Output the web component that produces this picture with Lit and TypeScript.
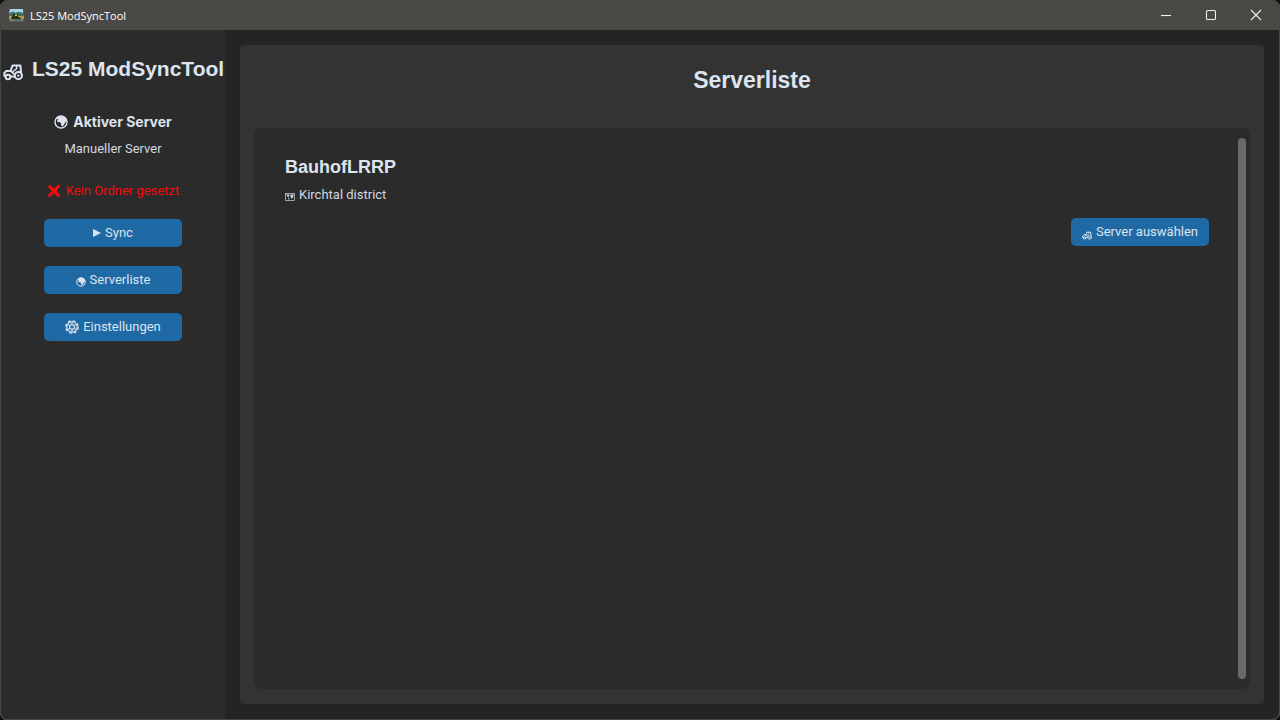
import { LitElement, html, css, svg } from "lit";
import { customElement } from "lit/decorators.js";

const tractor = (cls: string) => html`<svg class=${cls} viewBox="0 0 20 18" aria-hidden="true">
  ${svg`<g fill="none" stroke="currentColor" stroke-width="2" stroke-linejoin="round" stroke-linecap="round">
    <path d="M7.5 8 9.6 2.4H17.4L18 9"/><path d="M8 8H3.4L1.4 9.8V13"/><path d="M8 8 10.6 10.6M8 13.4H11.6"/>
    <path d="M10.4 8.2 13.6 5.6V2.6" stroke-width="1.4"/>
    <circle cx="5" cy="14" r="2.3"/><circle cx="15.4" cy="12.6" r="3.6"/></g>
    <circle cx="15.4" cy="12.6" r="1.2" fill="currentColor"/>`}
</svg>`;

const globe = (cls: string) => html`<svg class=${cls} viewBox="0 0 14 14" aria-hidden="true">
  ${svg`<circle cx="7" cy="7" r="6" fill="none" stroke="currentColor" stroke-width="1.4"/>
    <path fill="currentColor" d="M3.2 2.2 7 1 10.8 2.2 12.6 5 12.4 7.2 11 7.4 10 9.8 8.4 11.6 7.2 10.6 7 8.2 5.8 7.2 3.6 7 3 5.6 4.2 4.4 3 3.8Z"/>`}
</svg>`;

@customElement("app-root")
export class AppRoot extends LitElement {
  static styles = css`
    :host {
      display: flex;
      flex-direction: column;
      height: 100vh;
      box-sizing: border-box;
      overflow: hidden;
      background: #242424;
      border: 1px solid #454545;
      border-top: 0;
      border-radius: 8px;
      outline: 8px solid #101010;
      color: #dce4ee;
      font: 13px/20px Roboto, sans-serif;
    }
    h1, h2, h3, p { margin: 0; }
    button { font: inherit; color: inherit; border: 0; padding: 0; }
    .titlebar {
      display: flex;
      align-items: center;
      flex: none;
      height: 30px;
      padding: 0 1px 0 8px;
      background: #4b4946;
      color: #fff;
    }
    .logo { width: 15px; height: 13px; margin-right: 6px; }
    .caption { flex: 1; padding-top: 1px; font: 11px/20px "Open Sans", "Noto Sans", sans-serif; }
    .control {
      display: grid;
      place-items: center;
      width: 45px;
      height: 30px;
      background: none;
    }
    .control svg { width: 12px; height: 12px; fill: none; stroke: #f0f0f0; stroke-width: 1.1; }
    .body { display: flex; flex: 1; min-height: 0; }
    .sidebar {
      display: flex;
      flex-direction: column;
      align-items: center;
      flex: none;
      width: 224px;
      background: #2b2b2b;
      white-space: nowrap;
    }
    .brand {
      display: flex;
      align-items: center;
      gap: 9px;
      align-self: stretch;
      padding-left: 2px;
      margin-top: 24px;
      font: bold 21px/30px "Liberation Sans", Arial, sans-serif;
    }
    .active {
      display: flex;
      align-items: center;
      gap: 5px;
      margin-top: 28px;
      font: bold 14px/20px Inter, sans-serif;
    }
    .server { margin-top: 7px; color: #d2d8e0; }
    .warning {
      display: flex;
      align-items: center;
      gap: 5px;
      margin-top: 22px;
      color: #f20c0c;
    }
    .nav { display: flex; flex-direction: column; gap: 19px; margin-top: 18px; }
    .action {
      display: flex;
      align-items: center;
      justify-content: center;
      gap: 4px;
      width: 138px;
      height: 28px;
      border-radius: 5px;
      background: #1f6aa5;
    }
    .content {
      display: flex;
      flex-direction: column;
      flex: 1;
      min-width: 0;
      margin: 15px;
      padding: 15px 14px;
      border-radius: 4px;
      background: #333;
    }
    .heading {
      padding-bottom: 28px;
      font: bold 23px/40px "Liberation Sans", Arial, sans-serif;
      text-align: center;
    }
    .list {
      display: flex;
      flex: 1;
      padding: 10px 4px 10px 31px;
      border-radius: 8px;
      background: #2b2b2b;
    }
    .entry { display: flex; flex-direction: column; flex: 1; padding-top: 16px; }
    .name { font: bold 18px/26px "Liberation Sans", Arial, sans-serif; }
    .map { display: flex; align-items: center; gap: 4px; margin-top: 5px; color: #d2d8e0; }
    .entry .action { align-self: flex-end; margin-top: 13px; }
    .scrollbar { width: 8px; margin-left: 29px; border-radius: 4px; background: #696969; }
    .tractor { width: 20px; height: 18px; margin-top: 5px; }
    .tractor-small { width: 10px; height: 9px; margin-top: 6px; }
    .globe { width: 14px; height: 14px; }
    .globe-small { width: 10px; height: 10px; margin-top: 4px; }
    .cross { width: 14px; height: 14px; }
    .play { width: 8px; height: 8px; }
    .gear { width: 14px; height: 14px; }
    .map-icon { width: 10px; height: 8px; margin-top: 4px; }
  `;

  render() {
    return html`
      <header class="titlebar">
        <svg class="logo" viewBox="0 0 15 13" aria-hidden="true">
          <rect width="15" height="13" rx="1.5" fill="#536044" />
          <path d="M1 0H14V4L9 3 4 5 0 4Z" fill="#a9d4ee" />
          <path d="M0 4 4 2.5 7 4 11 3 15 5V7H0Z" fill="#427064" />
          <path d="M0 7H15V10H0Z" fill="#b09a3c" />
          <path d="M4 5H9V8L12 9V12H5L2 10Z" fill="#263323" />
          <path d="M6 5.5H8V7H6Z" fill="#d9d36b" />
          <path d="M1 11H14" stroke="#a0adb0" />
        </svg>
        <span class="caption">LS25 ModSyncTool</span>
        <button class="control" aria-label="Minimieren"><svg viewBox="0 0 12 12"><path d="M1 6.5H11" /></svg></button>
        <button class="control" aria-label="Maximieren"><svg viewBox="0 0 12 12"><rect x="1.5" y="1.5" width="9" height="9" rx="1" /></svg></button>
        <button class="control" aria-label="Schließen"><svg viewBox="0 0 12 12"><path d="M1 1 11 11M11 1 1 11" /></svg></button>
      </header>
      <div class="body">
        <aside class="sidebar">
          <h1 class="brand">${tractor("tractor")}<span>LS25 ModSyncTool</span></h1>
          <h2 class="active">${globe("globe")}<span>Aktiver Server</span></h2>
          <p class="server">Manueller Server</p>
          <p class="warning">
            <svg class="cross" viewBox="0 0 14 14" aria-hidden="true"><path d="M.8 2.5 2.6 .8 7 4.8 11.4 .6 13.4 2.4 9.3 7 13.4 11.4 11.6 13.4 7 9.2 2.5 13.4 .6 11.6 4.7 7Z" fill="currentColor" /></svg>
            <span>Kein Ordner gesetzt</span>
          </p>
          <nav class="nav">
            <button class="action"><svg class="play" viewBox="0 0 8 8" aria-hidden="true"><path d="M0 0 8 4 0 8Z" fill="currentColor" /></svg>Sync</button>
            <button class="action">${globe("globe-small")}Serverliste</button>
            <button class="action">
              <svg class="gear" viewBox="0 0 14 14" aria-hidden="true">
                <g fill="none" stroke="currentColor">
                  <circle cx="7" cy="7" r="5.2" stroke-width="1.2" />
                  <circle cx="7" cy="7" r="6.3" stroke-width="1.2" stroke-dasharray="2.8 2.15" />
                  <circle cx="7" cy="7" r="2.4" stroke-width="1.2" />
                  <path stroke-width="1" d="M7 4.6V1.8M7 9.4V12.2M4.9 5.8 2.5 4.4M9.1 8.2 11.5 9.6M9.1 5.8 11.5 4.4M4.9 8.2 2.5 9.6" />
                </g>
              </svg>Einstellungen</button>
          </nav>
        </aside>
        <main class="content">
          <h2 class="heading">Serverliste</h2>
          <section class="list">
            <article class="entry">
              <h3 class="name">BauhofLRRP</h3>
              <p class="map">
                <svg class="map-icon" viewBox="0 0 10 8" aria-hidden="true">
                  <rect x=".5" y=".5" width="9" height="7" fill="none" stroke="currentColor" stroke-width=".7" />
                  <path d="M1.2 1.6H4.6L3.8 3.8 3 4.3ZM5.4 1.6H8.9L7.8 4.5 6.6 6 5.6 3.8ZM3 4.6 4.6 5.2 3.8 7Z" fill="currentColor" />
                </svg>
                <span>Kirchtal district</span>
              </p>
              <button class="action">${tractor("tractor-small")}Server auswählen</button>
            </article>
            <div class="scrollbar"></div>
          </section>
        </main>
      </div>
    `;
  }
}
